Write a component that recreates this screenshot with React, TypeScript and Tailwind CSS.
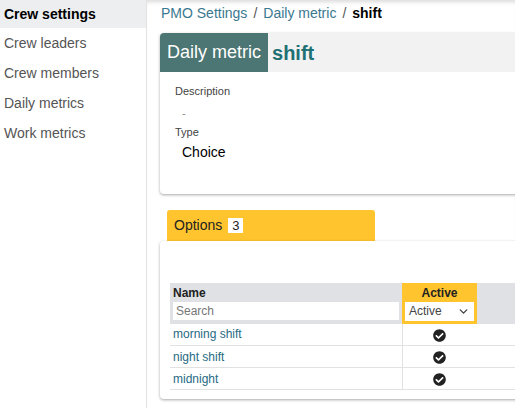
import { FaCheckCircle } from 'react-icons/fa'
import { ChevronDown } from 'lucide-react'

const menu = ['Crew settings', 'Crew leaders', 'Crew members', 'Daily metrics', 'Work metrics']

const options = ['morning shift', 'night shift', 'midnight']

function Sidebar() {
  return (
    <aside className="w-[147px] shrink-0 border-r border-[#e3e3e3] bg-white">
      {menu.map((item, idx) => (
        <div
          key={item}
          className={
            idx === 0
              ? 'h-[28px] pl-[4px] flex items-center bg-[#eceef0] font-bold text-[14px] text-black'
              : 'h-[30px] pl-[4px] flex items-center text-[14px] text-[#555]'
          }
        >
          {item}
        </div>
      ))}
    </aside>
  )
}

function MetricCard() {
  return (
    <div className="w-[420px] rounded-[4px] bg-white shadow-[0_1px_3px_rgba(0,0,0,0.35)]">
      <div className="flex items-center h-[39px] bg-[#f2f2f2] rounded-t-[4px]">
        <div className="h-full flex items-center px-[7px] bg-[#4b7673] text-white text-[18px] rounded-tl-[4px]">
          Daily metric
        </div>
        <div className="pl-[4px] text-[20px] font-bold text-[#1f7074]">shift</div>
      </div>
      <div className="pl-[15px] pt-[11px] pb-[31px]">
        <div className="text-[11px] text-[#444]">Description</div>
        <div className="pl-[7px] pt-[5px] text-[11px] text-[#888]">-</div>
        <div className="pt-[3px] text-[11px] text-[#444]">Type</div>
        <div className="pl-[7px] pt-[1px] text-[14px] text-black">Choice</div>
      </div>
    </div>
  )
}

function OptionsCard() {
  return (
    <div>
      <div className="ml-[7px] w-[208px] h-[31px] flex items-center gap-[6px] px-[7px] rounded-t-[3px] bg-[#ffc42e] text-[14px] text-[#222]">
        Options
        <span className="bg-white px-[4px] leading-[15px] text-[13px]">3</span>
      </div>
      <div className="w-[420px] rounded-[4px] bg-white shadow-[0_1px_3px_rgba(0,0,0,0.35)] pl-[10px] pt-[42px] pb-[9px]">
        <table className="w-[400px] border-collapse text-[12px]">
          <thead>
            <tr className="bg-[#dfe1e5]">
              <th className="w-[232px] text-left font-bold text-[#222] px-[3px] pt-[3px] pb-[3px] align-top">
                <div className="leading-[14px]">Name</div>
                <div className="mt-[2px] h-[18px] bg-white flex items-center px-[3px] font-normal text-[12px] text-[#777]">
                  Search
                </div>
              </th>
              <th className="w-[75px] bg-[#ffc42e] px-[3px] pt-[3px] pb-[3px] align-top font-bold text-[#222]">
                <div className="leading-[14px] text-center">Active</div>
                <div className="mt-[2px] h-[19px] bg-white flex items-center justify-between px-[4px] font-normal text-[12px] text-[#444]">
                  Active
                  <ChevronDown size={13} strokeWidth={2.5} className="text-[#444]" />
                </div>
              </th>
              <th />
            </tr>
          </thead>
          <tbody>
            {options.map(opt => (
              <tr key={opt} className="h-[22px] border-b border-[#e2e2e2]">
                <td className="px-[3px] text-[#1f6a84] border-r border-[#e2e2e2]">{opt}</td>
                <td className="text-center">
                  <FaCheckCircle className="inline-block w-[13px] h-[13px] text-[#222]" />
                </td>
                <td />
              </tr>
            ))}
          </tbody>
        </table>
      </div>
    </div>
  )
}

export default function App() {
  return (
    <div className="w-[515px] h-[408px] overflow-hidden flex bg-white font-['Liberation_Sans',Arial,sans-serif]">
      <Sidebar />
      <main className="flex-1 min-w-0 pl-[13px] shadow-[inset_0_5px_4px_-3px_rgba(0,0,0,0.15)]">
        <div className="h-[27px] flex items-center pl-[1px] text-[14px] text-[#3a7890] gap-[6px]">
          <span>PMO Settings</span>
          <span className="text-[#555]">/</span>
          <span>Daily metric</span>
          <span className="text-[#555]">/</span>
          <span className="font-bold text-black">shift</span>
        </div>
        <div className="mt-[6px]">
          <MetricCard />
        </div>
        <div className="mt-[16px]">
          <OptionsCard />
        </div>
      </main>
    </div>
  )
}
